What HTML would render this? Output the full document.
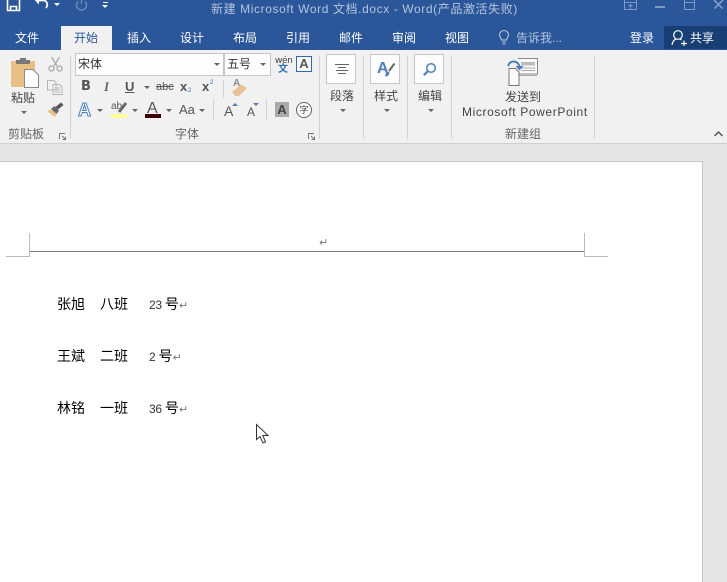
<!DOCTYPE html>
<html lang="zh"><head><meta charset="utf-8"><title>Word</title>
<style>
html,body{margin:0;padding:0;overflow:hidden}
body{width:727px;height:582px;position:relative;background:#e6e6e6;font-family:"Liberation Sans","Noto Sans CJK SC",sans-serif;font-size:12px;color:#444}
.a{position:absolute;white-space:nowrap;line-height:1}
.b{position:absolute}
.tab{position:absolute;top:31px;color:#fff;font-size:12px;line-height:14px;white-space:nowrap}
.sep{position:absolute;width:1px;background:#d4d4d4}
.tri{position:absolute;width:0;height:0;border-left:3px solid transparent;border-right:3px solid transparent;border-top:3px solid #666}
.box{position:absolute;background:#fdfdfd;border:1px solid #c6c6c6;box-sizing:border-box}
.gl{position:absolute;font-size:12px;color:#666;line-height:12px;white-space:nowrap}
.doc{position:absolute;font-size:14px;color:#000;line-height:16px;white-space:nowrap;font-family:"Noto Sans CJK SC","WenQuanYi Zen Hei",sans-serif}
.num{font-family:"Liberation Sans",sans-serif;font-size:12px;color:#333;letter-spacing:-.3px}
.ret{color:#777;font-size:11px;font-family:"DejaVu Sans",sans-serif}
svg{position:absolute;overflow:visible}
</style></head>
<body>
<!-- title bar -->
<div class="b" style="left:0;top:0;width:727px;height:50px;background:#2b579a"></div>
<svg style="left:6px;top:0" width="16" height="12" viewBox="0 0 16 12"><path d="M1.500 -2V10.500H13.500V-2M4.500 10V6.500H10.500V10" fill="none" stroke="#fff" stroke-width="1.600"/></svg>
<svg style="left:34px;top:0" width="16" height="12" viewBox="0 0 16 12"><path d="M2 0.500H9.500C13 0.500 14.500 5 12 8" fill="none" stroke="#fff" stroke-width="1.800"/><path d="M1 0.500L5 -3.500V4.500Z" fill="#fff"/></svg>
<div class="tri" style="left:54px;top:3px;border-top-color:#fff"></div>
<svg style="left:75px;top:0" width="13" height="12" viewBox="0 0 13 12"><path d="M3 1.500A5 5 0 1 0 10 1.500M6.500 -2V4" fill="none" stroke="#6f8fbe" stroke-width="1.300"/></svg>
<div class="b" style="left:103px;top:2px;width:5px;height:1px;background:#fff"></div>
<div class="tri" style="left:102px;top:5px;border-top-color:#fff"></div>
<div class="a" style="left:211px;top:3px;font-size:12px;color:#b3c4de;letter-spacing:.6px">新建 Microsoft Word 文档.docx - Word(产品激活失败)</div>
<svg style="left:624px;top:0" width="13" height="10" viewBox="0 0 13 10"><path d="M.5 0V9.500H12.500V0M.5 2.500H12.500M6.500 9V5M4.500 6.500L6.500 4.500L8.500 6.500" fill="none" stroke="#7d99c4" stroke-width="1"/></svg>
<div class="b" style="left:655px;top:6px;width:10px;height:2px;background:#7d99c4"></div>
<svg style="left:684px;top:0" width="11" height="10" viewBox="0 0 11 10"><path d="M.5 0V9.500H10.500V0M.5 2.500H10.500" fill="none" stroke="#7d99c4" stroke-width="1"/></svg>
<svg style="left:713px;top:0" width="11" height="9" viewBox="0 0 11 9"><path d="M1 0L9.500 8.500M10 0L1.500 8.500" fill="none" stroke="#7d99c4" stroke-width="1.700"/></svg>
<!-- tabs -->
<div class="b" style="left:61px;top:26px;width:51px;height:24px;background:#f1f1f1"></div>
<div class="tab" style="left:15px">文件</div>
<div class="tab" style="left:74px;color:#2b579a">开始</div>
<div class="tab" style="left:127px">插入</div>
<div class="tab" style="left:180px">设计</div>
<div class="tab" style="left:233px">布局</div>
<div class="tab" style="left:286px">引用</div>
<div class="tab" style="left:339px">邮件</div>
<div class="tab" style="left:392px">审阅</div>
<div class="tab" style="left:445px">视图</div>
<svg style="left:498px;top:30px" width="12" height="16" viewBox="0 0 12 16"><path d="M3.500 10C3.500 8 1.500 7.500 1.500 5A4.500 4.500 0 0 1 10.500 5C10.500 7.500 8.500 8 8.500 10ZM4 12H8M4.500 14H7.500" fill="none" stroke="#b3c4de" stroke-width="1.100"/></svg>
<div class="tab" style="left:516px;color:#b3c4de">告诉我...</div>
<div class="tab" style="left:630px">登录</div>
<div class="b" style="left:664px;top:26px;width:63px;height:23px;background:#173f74"></div>
<svg style="left:671px;top:29px" width="16" height="17" viewBox="0 0 16 17"><circle cx="7" cy="6" r="4.300" fill="none" stroke="#fff" stroke-width="1.200"/><path d="M1 16C1.500 12.500 3.500 10.500 5 10M9 10L10.500 11M10 14.500H16M13 11.500V17" fill="none" stroke="#fff" stroke-width="1.200"/></svg>
<div class="tab" style="left:690px">共享</div>
<!-- ribbon -->
<div class="b" style="left:0;top:50px;width:727px;height:93px;background:#f1f1f1"></div>
<div class="b" style="left:0;top:143px;width:727px;height:1px;background:#d0d0d0"></div>
<div class="sep" style="left:70px;top:55px;height:84px"></div>
<div class="sep" style="left:319px;top:55px;height:84px"></div>
<div class="sep" style="left:363px;top:55px;height:84px"></div>
<div class="sep" style="left:407px;top:55px;height:84px"></div>
<div class="sep" style="left:451px;top:55px;height:84px"></div>
<div class="sep" style="left:594px;top:55px;height:84px"></div>
<!-- clipboard -->
<svg style="left:11px;top:58px" width="29" height="31" viewBox="0 0 29 31"><path d="M0 3H24V29H0Z" fill="#e8bf85"/><rect x="5" y="2" width="14" height="4" fill="#777"/><rect x="9" y="0" width="6" height="3" fill="#777"/><path d="M13.500 11.500H22L27.500 17V29.500H13.500Z" fill="#fff" stroke="#888"/></svg>
<div class="a" style="left:11px;top:92px;font-size:12px;color:#444">粘贴</div>
<div class="tri" style="left:21px;top:111px"></div>
<svg style="left:48px;top:56px" width="15" height="16" viewBox="0 0 15 16"><path d="M3.500 1L9 10M11.500 1L6 10" fill="none" stroke="#aaa" stroke-width="1.300"/><circle cx="3.500" cy="12.500" r="2.500" fill="none" stroke="#aaa" stroke-width="1.300"/><circle cx="11.500" cy="12.500" r="2.500" fill="none" stroke="#aaa" stroke-width="1.300"/></svg>
<svg style="left:47px;top:80px" width="16" height="15" viewBox="0 0 16 15"><path d="M.5.5H7L9 2.500V10H.5ZM6 4.500H12.500L15 7V14.500H6Z" fill="#f1f1f1" stroke="#b5b5b5"/><path d="M8 8H13M8 10H13M8 12H13" stroke="#b5b5b5"/></svg>
<svg style="left:47px;top:102px" width="17" height="15" viewBox="0 0 17 15"><path d="M0 9L4 7.500L9.500 12.500L8 15Z" fill="#e8bf85"/><path d="M4 7L7.500 4L12 8.500L9.500 12Z" fill="#666"/><path d="M8.500 5L14 .5L16.500 3L11 7.500" fill="#555"/></svg>
<div class="gl" style="left:8px;top:128px">剪贴板</div>
<svg style="left:59px;top:133px" width="7" height="7" viewBox="0 0 7 7"><path d="M.5 6V.5H6M3 3L6.500 6.500M6.500 3.500V6.500H3.500" fill="none" stroke="#777"/></svg>
<!-- font -->
<div class="box" style="left:75px;top:53px;width:149px;height:23px;"></div>
<div class="a" style="left:78px;top:58px;font-size:12px;color:#333">宋体</div>
<div class="tri" style="left:214px;top:63px"></div>
<div class="box" style="left:224px;top:53px;width:47px;height:23px"></div>
<div class="a" style="left:227px;top:58px;font-size:12px;color:#333">五号</div>
<div class="tri" style="left:260px;top:63px"></div>
<div class="a" style="left:275px;top:57px;font-size:9px;color:#444;font-family:'DejaVu Sans',sans-serif;letter-spacing:-.4px">wén</div>
<div class="a" style="left:278px;top:65px;font-size:10px;color:#2b6cb0;font-weight:bold">文</div>
<div class="b" style="left:296px;top:56px;width:16px;height:16px;box-sizing:border-box;border:1px solid #2b6cb0;background:#fafafa;color:#555;font-weight:bold;font-size:13px;line-height:14px;text-align:center">A</div>
<div class="a" style="left:81px;top:80px;font-size:13px;font-weight:bold;color:#555;font-family:'DejaVu Sans',sans-serif">B</div>
<div class="a" style="left:104px;top:80px;font-size:13px;font-style:italic;font-family:'Liberation Serif',serif;font-weight:bold;color:#666">I</div>
<div class="a" style="left:125px;top:80px;font-size:13px;font-weight:bold;color:#555;text-decoration:underline">U</div>
<div class="tri" style="left:144px;top:86px"></div>
<div class="a" style="left:156px;top:82px;font-size:11px;color:#555;text-decoration:line-through">abc</div>
<div class="a" style="left:180px;top:80px;font-size:13px;font-weight:bold;color:#555">x</div>
<div class="a" style="left:188px;top:88px;font-size:6px;color:#2b6cb0">2</div>
<div class="a" style="left:202px;top:80px;font-size:13px;font-weight:bold;color:#555">x</div>
<div class="a" style="left:210px;top:80px;font-size:6px;color:#2b6cb0">2</div>
<div class="sep" style="left:223px;top:80px;height:18px"></div>
<div class="a" style="left:233px;top:79px;font-size:10px;color:#888;font-weight:bold">A</div>
<svg style="left:232px;top:83px" width="16" height="13" viewBox="0 0 16 13"><path d="M0 9L9 1.500L15 5L7 13H3Z" fill="#e8bf97"/></svg>
<div class="a" style="left:78px;top:101px;font-size:18px;font-weight:bold;color:#fff;-webkit-text-stroke:1px #4c7dbb">A</div>
<div class="tri" style="left:97px;top:109px"></div>
<div class="a" style="left:111px;top:102px;font-size:10px;color:#555">ab</div>
<svg style="left:118px;top:102px" width="10" height="11" viewBox="0 0 10 11"><path d="M1 10L8 1" stroke="#666" stroke-width="3"/></svg>
<div class="b" style="left:111px;top:114px;width:16px;height:4px;background:#ffff99"></div>
<div class="tri" style="left:132px;top:109px"></div>
<div class="a" style="left:147px;top:101px;font-size:16px;color:#555">A</div>
<div class="b" style="left:145px;top:114px;width:16px;height:4px;background:#3f0000"></div>
<div class="tri" style="left:166px;top:109px"></div>
<div class="a" style="left:179px;top:103px;font-size:13px;color:#555">Aa</div>
<div class="tri" style="left:199px;top:109px"></div>
<div class="sep" style="left:213px;top:99px;height:22px"></div>
<div class="a" style="left:224px;top:104px;font-size:14px;color:#555">A</div>
<div class="tri" style="left:232px;top:103px;border-top:0;border-bottom:3px solid #4f7fba"></div>
<div class="a" style="left:247px;top:106px;font-size:12px;color:#555">A</div>
<div class="tri" style="left:253px;top:103px;border-top-color:#4f7fba"></div>
<div class="sep" style="left:266px;top:99px;height:22px"></div>
<div class="b" style="left:275px;top:102px;width:14px;height:15px;background:#aaa;color:#444;font-weight:bold;font-size:13px;line-height:15px;text-align:center">A</div>
<div class="b" style="left:296px;top:102px;width:16px;height:16px;box-sizing:border-box;border:1px solid #666;border-radius:50%;background:#fafafa;font-size:9px;line-height:14px;text-align:center;color:#444">字</div>
<div class="gl" style="left:175px;top:128px">字体</div>
<svg style="left:308px;top:133px" width="7" height="7" viewBox="0 0 7 7"><path d="M.5 6V.5H6M3 3L6.500 6.500M6.500 3.500V6.500H3.500" fill="none" stroke="#777"/></svg>
<!-- paragraph/style/edit -->
<div class="box" style="left:326px;top:54px;width:30px;height:30px"></div>
<svg style="left:335px;top:64px" width="14" height="10" viewBox="0 0 14 10"><path d="M0 .5H14M3 3.500H11M1 6.500H13M3 9.500H11" stroke="#666"/></svg>
<div class="a" style="left:330px;top:90px;font-size:12px;color:#444">段落</div>
<div class="tri" style="left:340px;top:109px"></div>
<div class="box" style="left:370px;top:54px;width:30px;height:30px"></div>
<div class="a" style="left:377px;top:61px;font-size:16px;font-weight:bold;color:#4f7fba">A</div>
<svg style="left:384px;top:63px" width="11" height="14" viewBox="0 0 11 14"><path d="M10.500 .5L5 8" stroke="#666" stroke-width="2"/><path d="M1 13.500C1.500 10.500 3 8.500 5 9C6 11 4.500 13.500 1 13.500Z" fill="#4f7fba"/></svg>
<div class="a" style="left:374px;top:90px;font-size:12px;color:#444">样式</div>
<div class="tri" style="left:384px;top:109px"></div>
<div class="box" style="left:414px;top:54px;width:30px;height:30px"></div>
<svg style="left:423px;top:63px" width="13" height="13" viewBox="0 0 13 13"><circle cx="8" cy="5" r="4.300" fill="none" stroke="#4f7fba" stroke-width="1.500"/><path d="M5 8L.8 12.200" stroke="#4f7fba" stroke-width="2.200"/></svg>
<div class="a" style="left:418px;top:90px;font-size:12px;color:#444">编辑</div>
<div class="tri" style="left:428px;top:109px"></div>
<!-- send -->
<svg style="left:507px;top:57px" width="32" height="30" viewBox="0 0 32 30"><path d="M11 1.500H30.500V17H11" fill="#fafafa" stroke="#888"/><path d="M14 5H28V8.500H14Z" fill="#bbb"/><path d="M14 11H28M14 13.500H28M11 18.500H30" stroke="#aaa"/><path d="M2 11.500H8.500L12 15V28.500H2Z" fill="#fafafa" stroke="#777"/><path d="M1 9C3 3 10 3 12.500 9" fill="none" stroke="#4f7fba" stroke-width="2"/><path d="M8.500 9H16.500L12.500 13.500Z" fill="#4f7fba"/></svg>
<div class="a" style="left:505px;top:91px;font-size:12px;color:#444">发送到</div>
<div class="a" style="left:462px;top:106px;font-size:12px;color:#444;letter-spacing:.62px">Microsoft PowerPoint</div>
<div class="gl" style="left:505px;top:128px">新建组</div>
<svg style="left:714px;top:131px" width="9" height="6" viewBox="0 0 9 6"><path d="M.5 5L4.500 1L8.500 5" fill="none" stroke="#555" stroke-width="1.500"/></svg>
<!-- page -->
<div class="b" style="left:0;top:161px;width:702px;height:420px;background:#fff;border-right:1px solid #c6c6c6;border-top:1px solid #c6c6c6;box-sizing:content-box"></div>
<div class="b" style="left:29px;top:251px;width:555px;height:1px;background:#808080"></div>
<div class="b" style="left:29px;top:233px;width:1px;height:24px;background:#bbb"></div>
<div class="b" style="left:6px;top:256px;width:24px;height:1px;background:#bbb"></div>
<div class="b" style="left:584px;top:233px;width:1px;height:24px;background:#bbb"></div>
<div class="b" style="left:584px;top:256px;width:24px;height:1px;background:#bbb"></div>
<div class="a ret" style="left:319px;top:237px">↵</div>
<div class="doc" style="left:57px;top:296px">张旭</div><div class="doc" style="left:100px;top:296px">八班</div>
<div class="doc" style="left:149px;top:296px"><span class="num">23</span> 号<span class="ret">↵</span></div>
<div class="doc" style="left:57px;top:348px">王斌</div><div class="doc" style="left:100px;top:348px">二班</div>
<div class="doc" style="left:149px;top:348px"><span class="num">2</span> 号<span class="ret">↵</span></div>
<div class="doc" style="left:57px;top:400px">林铭</div><div class="doc" style="left:100px;top:400px">一班</div>
<div class="doc" style="left:149px;top:400px"><span class="num">36</span> 号<span class="ret">↵</span></div>
<svg style="left:256px;top:424px" width="13" height="20" viewBox="0 0 13 20"><path d="M.5.5V15.500L4 12.500L7 19L9.500 18L6.800 11.500H12Z" fill="#fff" stroke="#333"/></svg>
</body></html>
